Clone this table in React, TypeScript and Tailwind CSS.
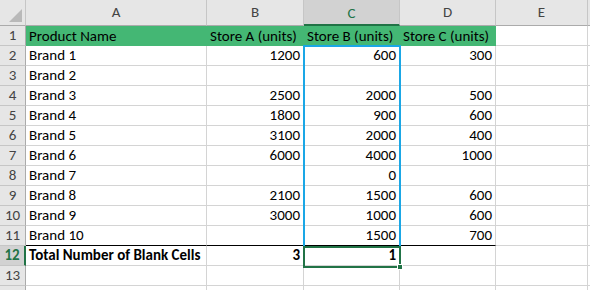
import React from 'react';

// Excel-like sheet: count of blank cells per store column.
const cols = ['A', 'B', 'C', 'D', 'E'];

const rows: (string | number | null)[][] = [
  ['Product Name', 'Store A (units)', 'Store B (units)', 'Store C (units)'],
  ['Brand 1', 1200, 600, 300],
  ['Brand 2', null, null, null],
  ['Brand 3', 2500, 2000, 500],
  ['Brand 4', 1800, 900, 600],
  ['Brand 5', 3100, 2000, 400],
  ['Brand 6', 6000, 4000, 1000],
  ['Brand 7', null, 0, null],
  ['Brand 8', 2100, 1500, 600],
  ['Brand 9', 3000, 1000, 600],
  ['Brand 10', null, 1500, 700],
  ['Total Number of Blank Cells', 3, 1, null],
  [null, null, null, null],
  [null, null, null, null],
];

const font = { fontFamily: '"Carlito", "Lato", "Liberation Sans", sans-serif' };

export default function App() {
  return (
    <div className="relative h-[290px] w-[590px] overflow-hidden bg-white text-[15px] text-black" style={font}>
      <div className="grid grid-cols-[26px_181px_97px_96px_96px_92px_2px]">
        {/* corner */}
        <div className="flex h-[26px] items-end justify-end border-b border-r border-b-[#ababab] border-r-[#c6c6c6] bg-[#e6e6e6] p-[3px]">
          <svg width="13" height="13">
            <polygon points="13,0 13,13 0,13" fill="#b9b9b9" />
          </svg>
        </div>
        {cols.map((c) =>
          c === 'C' ? (
            <div
              key={c}
              className="flex h-[26px] items-center justify-center border-b-2 border-r border-b-[#217346] border-r-[#c6c6c6] bg-[#d2d2d2] pt-[2px] text-[#217346]"
            >
              {c}
            </div>
          ) : (
            <div
              key={c}
              className="flex h-[26px] items-center justify-center border-b border-r border-b-[#ababab] border-r-[#c6c6c6] bg-[#e6e6e6] text-[#444]"
            >
              {c}
            </div>
          ),
        )}
        <div className="h-[26px] border-b border-b-[#ababab] bg-[#e6e6e6]" />

        {rows.map((r, i) => {
          const n = i + 1;
          const head = n === 1;
          const total = n === 12;
          const underline = n === 11;
          return (
            <React.Fragment key={n}>
              {total ? (
                <div className="flex h-[20px] items-center justify-center border-b border-r-2 border-b-[#c6c6c6] border-r-[#217346] bg-[#d2d2d2] font-bold text-[#217346]">
                  {n}
                </div>
              ) : (
                <div className="flex h-[20px] items-center justify-center border-b border-r border-b-[#c6c6c6] border-r-[#ababab] bg-[#e6e6e6] text-[#444]">
                  {n < 14 ? n : null}
                </div>
              )}
              {r.map((v, j) => (
                <div
                  key={j}
                  className={
                    'flex h-[20px] items-center overflow-visible whitespace-nowrap px-[3px] ' +
                    (head
                      ? 'bg-[#44b774] '
                      : underline
                        ? 'border-b border-r border-r-[#d4d4d4] border-b-black '
                        : 'border-b border-r border-[#d4d4d4] ') +
                    (total ? 'font-bold ' : '') +
                    (typeof v === 'number' ? 'justify-end' : 'justify-start')
                  }
                >
                  {v}
                </div>
              ))}
              <div className="h-[20px] border-b border-r border-[#d4d4d4]" />
              <div className="h-[20px] border-b border-[#d4d4d4]" />
            </React.Fragment>
          );
        })}
      </div>

      {/* copy marquee around C2:C11 */}
      <div className="absolute left-[303px] top-[45px] h-[202px] w-[98px] border-2 border-b-0 border-[#1aa7e6]" />
      {/* active cell C12 with fill handle */}
      <div className="absolute left-[303px] top-[246px] h-[22px] w-[98px] border-2 border-[#217346]">
        <div className="absolute -bottom-[4px] -right-[4px] h-[6px] w-[6px] border border-white bg-[#217346]" />
      </div>
    </div>
  );
}
